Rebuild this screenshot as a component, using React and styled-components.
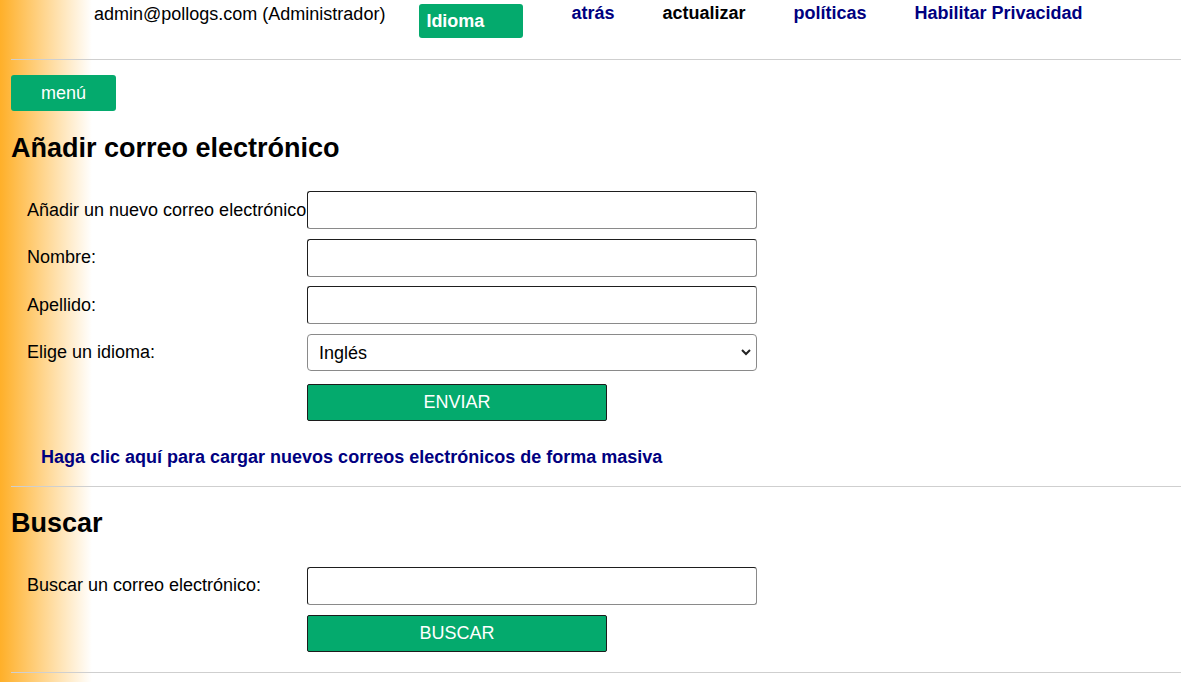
import React from "react";
import styled, { createGlobalStyle } from "styled-components";

const GlobalStyle = createGlobalStyle`
  html, body { margin: 0; padding: 0; }
  body {
    background: linear-gradient(90deg, #ffb02a 0px, #ffb22f 3px, #ffffff 92px) no-repeat;
    background-color: #ffffff;
    min-height: 682px;
    font-family: "Liberation Sans", Arial, sans-serif;
    font-size: 18px;
    color: #000;
  }
`;

const Page = styled.div`
  padding: 0 10px 0 11px;
`;

const Header = styled.header`
  display: flex;
  align-items: flex-start;
  height: 59px;
  padding-left: 83px;
  box-sizing: border-box;
`;

const UserText = styled.span`
  margin-top: 4px;
  line-height: 21px;
`;

const IdiomaButton = styled.button`
  margin: 4px 0 0 34px;
  width: 104px;
  height: 34px;
  padding: 0 7px;
  text-align: left;
  border: none;
  border-radius: 3px;
  background: #04aa6d;
  color: #fff;
  font-family: inherit;
  font-size: 18px;
  font-weight: bold;
  line-height: 34px;
`;

const NavLink = styled.a`
  margin: 3px 0 0 48px;
  line-height: 21px;
  font-weight: bold;
  text-decoration: none;
  color: ${(p) => (p.$dark ? "#000" : "#000080")};
`;

const Rule = styled.hr`
  margin: 0;
  border: none;
  border-top: 1px solid #cfcfcf;
  height: 0;
`;

const MenuButton = styled.button`
  display: block;
  margin-top: 15px;
  width: 105px;
  height: 36px;
  border: none;
  border-radius: 3px;
  background: #04aa6d;
  color: #fff;
  font-family: inherit;
  font-size: 18px;
  padding: 0;
`;

const Title = styled.h2`
  margin: ${(p) => p.$top}px 0 0;
  font-size: 27px;
  font-weight: bold;
  line-height: 31px;
`;

const Form = styled.form`
  display: grid;
  grid-template-columns: 280px 450px;
  row-gap: 9.7px;
  padding-left: 16px;
  margin-top: ${(p) => p.$top}px;
  align-items: center;
`;

const Label = styled.label`
  line-height: 21px;
  white-space: nowrap;
`;

const TextInput = styled.input`
  box-sizing: border-box;
  width: 450px;
  height: 38px;
  margin: 0;
  border: 1px solid;
  border-color: #1e1e1e #8a8a8a #8a8a8a #1e1e1e;
  border-radius: 3px;
  background: #fff;
  font-family: inherit;
  font-size: 18px;
  padding: 0 11px;
`;

const SelectWrap = styled.div`
  position: relative;
  width: 450px;
  height: 37px;
`;

const Select = styled.select`
  box-sizing: border-box;
  width: 100%;
  height: 100%;
  margin: 0;
  appearance: none;
  border: 1px solid #8a8a8a;
  border-radius: 4px;
  background: #fff;
  color: #000;
  font-family: inherit;
  font-size: 18px;
  padding: 0 11px;
`;

const Chevron = styled.svg`
  position: absolute;
  right: 6px;
  top: 14px;
  width: 10px;
  height: 8px;
  pointer-events: none;
`;

const SubmitButton = styled.button`
  grid-column: 2;
  box-sizing: border-box;
  width: 300px;
  height: 37px;
  margin-top: ${(p) => p.$top || 0}px;
  border: 1px solid #1c1c1c;
  border-radius: 2px;
  background: #04aa6d;
  color: #fff;
  font-family: inherit;
  font-size: 18px;
  padding: 0;
`;

const BulkLink = styled.a`
  display: block;
  margin: 26px 0 0 30px;
  line-height: 21px;
  font-weight: bold;
  color: #000080;
  text-decoration: none;
`;

const SectionRule = styled(Rule)`
  margin-top: ${(p) => p.$top}px;
`;

export default function App() {
  return (
    <>
      <GlobalStyle />
      <Page>
        <Header>
          <UserText>admin@pollogs.com (Administrador)</UserText>
          <IdiomaButton>Idioma</IdiomaButton>
          <NavLink href="#">atrás</NavLink>
          <NavLink href="#" $dark>actualizar</NavLink>
          <NavLink href="#">políticas</NavLink>
          <NavLink href="#">Habilitar Privacidad</NavLink>
        </Header>
        <Rule />
        <MenuButton>menú</MenuButton>
        <Title $top={22}>Añadir correo electrónico</Title>
        <Form $top={27} onSubmit={(e) => e.preventDefault()}>
          <Label>Añadir un nuevo correo electrónico</Label>
          <TextInput type="text" />
          <Label>Nombre:</Label>
          <TextInput type="text" />
          <Label>Apellido:</Label>
          <TextInput type="text" />
          <Label>Elige un idioma:</Label>
          <SelectWrap>
            <Select defaultValue="en">
              <option value="en">Inglés</option>
              <option value="es">Español</option>
            </Select>
            <Chevron viewBox="0 0 10 8">
              <path d="M1 2 L5 6 L9 2" fill="none" stroke="#222" strokeWidth="2" />
            </Chevron>
          </SelectWrap>
          <SubmitButton $top={3}>ENVIAR</SubmitButton>
        </Form>
        <BulkLink href="#">Haga clic aquí para cargar nuevos correos electrónicos de forma masiva</BulkLink>
        <SectionRule $top={18} />
        <Title $top={21}>Buscar</Title>
        <Form $top={28} onSubmit={(e) => e.preventDefault()}>
          <Label>Buscar un correo electrónico:</Label>
          <TextInput type="text" />
          <SubmitButton $top={1}>BUSCAR</SubmitButton>
        </Form>
        <SectionRule $top={20} />
      </Page>
    </>
  );
}
